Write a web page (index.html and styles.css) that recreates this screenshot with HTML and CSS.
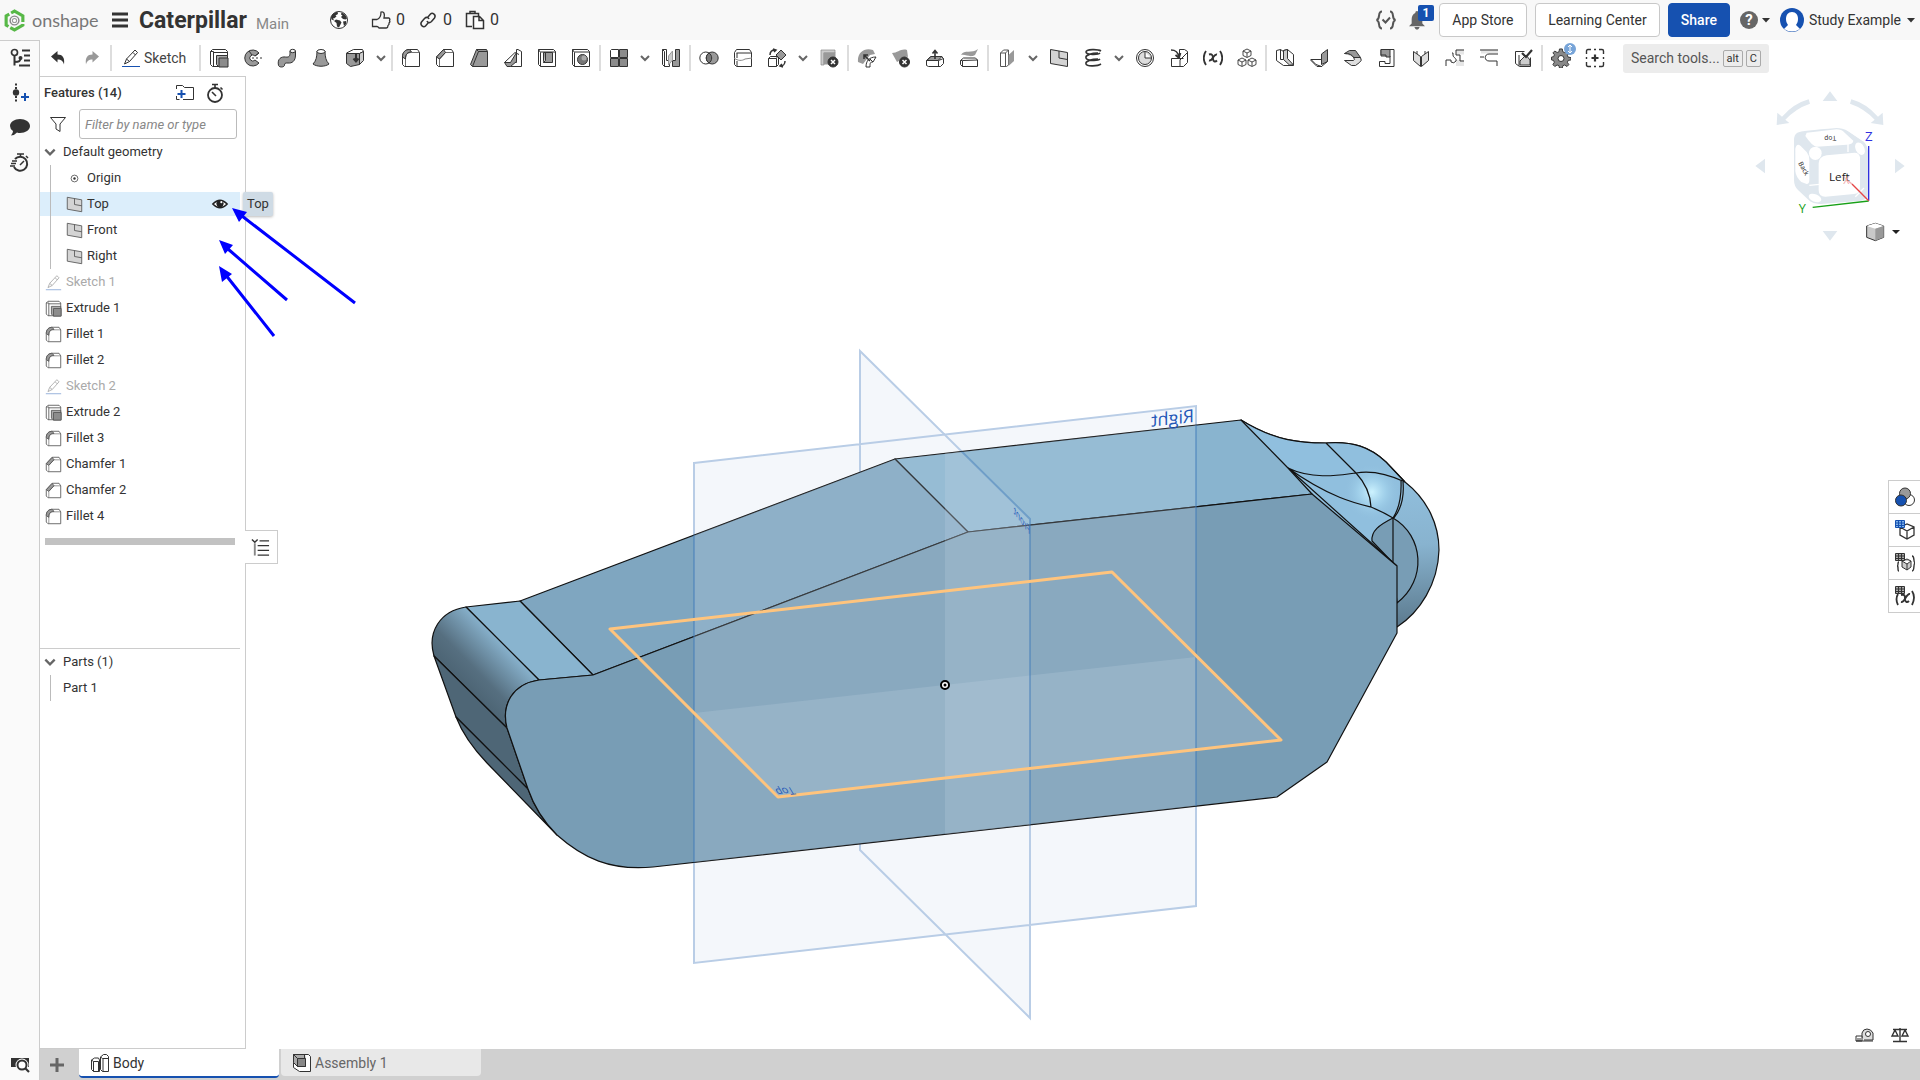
FILE: index.html
```html
<!DOCTYPE html>
<html lang="en">
<head>
<meta charset="utf-8">
<title>Caterpillar | Body</title>
<meta name="viewport" content="width=device-width, initial-scale=1">
<link rel="stylesheet" href="styles.css">
</head>
<body>
<svg class="sprite" aria-hidden="true">
  <symbol id="undo" viewBox="0 0 20 20"><path d="M3 8.500 9.500 3v3.500c5 0 7.500 3 6.500 10-1-3.500-2.500-5-6.500-5v3z" fill="currentColor" stroke="none"/></symbol>
  <symbol id="redo" viewBox="0 0 20 20"><path d="M17 8.500 10.500 3v3.500c-5 0-7.500 3-6.500 10 1-3.500 2.500-5 6.500-5v3z" fill="currentColor" stroke="none"/></symbol>
  <symbol id="sketch" viewBox="0 0 20 20"><path d="M3.500 16l2-5L14 2l2.500 2.500L8.500 13.500zM12 4.500l2.500 2.500M5.500 11l3 2.500" fill="none"/><path d="M1 18.500h18" stroke="#1651b0"/></symbol>
  <symbol id="extrude" viewBox="0 0 20 20"><path d="M1.500 3.500l2-2h13l2 2v15h-15l-2-2zM1.500 3.500h3v15M4.500 4.500h14" fill="#fff"/><path d="M7.500 7.500h11v11h-9l-2-2z" fill="#aaa"/><path d="M10 10h9v9h-9z" fill="#8c8c8c"/></symbol>
  <symbol id="revolve" viewBox="0 0 20 20"><path d="M16 5a8 8 0 1 0 0 10l-4-3a3 3 0 1 1 0-4z" fill="#999"/><path d="M9 10h2m2 0h2m2 0h2M12 8l4-3M6 3l3 4"/></symbol>
  <symbol id="sweep" viewBox="0 0 20 20"><path d="M1.500 17.500c-1.500-7 3-9 7-8.500 4 .5 4.500-1 4.500-5V3h5.500v4c0 6-3.500 8.500-7.500 8-3 0-3.500 0-3.500 2.500-1 2-5 2-6 0z" fill="#999"/><ellipse cx="15.700" cy="3" rx="2.700" ry="1.700" fill="#eee"/></symbol>
  <symbol id="loft" viewBox="0 0 20 20"><path d="M6 3c0 6-1 10-4 13 4 3 12 3 16 0-3-3-4-7-4-13z" fill="#999"/><ellipse cx="10" cy="3.500" rx="4" ry="2" fill="#fff"/></symbol>
  <symbol id="thicken" viewBox="0 0 20 20"><path d="M1.500 5l7-3.500h9l1 2-4 2h-13z" fill="#fff"/><path d="M1.500 5.500h13v11l-9 2-4-3z" fill="#999"/><path d="M14.500 5.500l4-2v9l-4 4z" fill="#ccc"/><path d="M11 6v7M8.500 10.500 11 13.500l2.500-3" stroke-width="2"/></symbol>
  <symbol id="fillet" viewBox="0 0 20 20"><path d="M1.500 9c0-5 3-7.500 7-7.500h8l2 3v14h-15l-2-2z" fill="#fff"/><path d="M1.500 9c0-5 3-7.500 7-7.500l2 2.500c-4 0-6 2-6 7z" fill="#999"/><path d="M4.500 18V11c0-5 2-6.500 6-6.500h8" fill="none" stroke-width=".7"/></symbol>
  <symbol id="chamfer" viewBox="0 0 20 20"><path d="M1.500 9l7-7.500h8l2 3v14h-15l-2-2z" fill="#fff"/><path d="M1.500 9l7-7.500 2 3-6 6.500z" fill="#999"/><path d="M4.500 18V11l6-6.500h8" fill="none" stroke-width=".7"/></symbol>
  <symbol id="draft" viewBox="0 0 20 20"><path d="M1.500 16.500l6-15h10l1 2v15h-15z" fill="#999"/><path d="M3.500 18.500l6-15h9M7.500 1.500l2 2"/></symbol>
  <symbol id="rib" viewBox="0 0 20 20"><path d="M15 1.500l3.500 2v15h-11v-4h6v-13z" fill="#fff"/><path d="M1.500 14.500h6l6-10v9l-6 5H4z" fill="#999"/><path d="M1.500 14.500 12 4.500l4 2"/></symbol>
  <symbol id="shell" viewBox="0 0 20 20"><path d="M1.500 1.500h15l2 2v15h-15l-2-2zM1.500 1.500l2 3v14M3.500 4h15" fill="#fff"/><path d="M6.500 4.500h9v10h-9z" fill="#999"/><path d="M6.500 14.500l2-2v-8" fill="#ccc"/></symbol>
  <symbol id="hole" viewBox="0 0 20 20"><path d="M1.500 1.500h15l2 2v15h-15l-2-2zM1.500 1.500l2 3v14M3.500 4h15" fill="#fff"/><circle cx="11.500" cy="11.500" r="5" fill="#777"/><circle cx="13" cy="10" r="2.500" fill="#aaa" stroke="none"/></symbol>
  <symbol id="pattern" viewBox="0 0 20 20"><path d="M1.500 2.500l1-1h7v8h-8z" fill="#fff"/><path d="M10.500 1.500h8v8h-8zM1.500 10.500h8v8h-8zM10.500 10.500h8v8h-8z" fill="#8c8c8c"/></symbol>
  <symbol id="mirror" viewBox="0 0 20 20"><path d="M1.500 1.500h4v11h3v6h-5l-2-2zM1.500 1.500l2 2v15" fill="#fff"/><path d="M14.500 1.500h4v17h-7v-6h3z" fill="#999"/><path d="M7.500 8l4-5v9l-4 5z" fill="#ccc" stroke="#999"/></symbol>
  <symbol id="boolean" viewBox="0 0 20 20"><circle cx="6.800" cy="10" r="6" fill="none"/><circle cx="13.200" cy="10" r="6" fill="#999"/><path d="M10 5a6 6 0 0 1 0 10 6 6 0 0 1 0-10" fill="#777"/></symbol>
  <symbol id="split" viewBox="0 0 20 20"><path d="M1.500 4.500l2-3h13l2 3v14h-15l-2-2zM3.500 5h15M4 5v5M4 13v5" fill="#fff"/><path d="M1 10c4 3 8 3 11 1l7-1" fill="none" stroke="#888"/></symbol>
  <symbol id="transform" viewBox="0 0 20 20"><path d="M1.500 10.500h8v8h-8zM1.500 10.500l2-2h7l-1 2M9.500 18.500l2-2v-7" fill="#fff"/><path d="M14 2l5 5-5 5-5-5z" fill="#999"/><path d="M3 7c0-3 2-5 5-5M6 1l3 1-2 2M18 13c0 3-2 5-4 5m1-2-2 2 3 1" stroke-width="1.500" fill="none"/></symbol>
  <symbol id="delpart" viewBox="0 0 20 20"><path d="M2 2h14v3H5v12H2z" fill="#ccc" stroke="#888" stroke-width=".7"/><path d="M4.500 4.500h12v12h-12z" fill="#999" stroke="none"/><circle cx="14" cy="14" r="5" fill="#333"/><path d="M12 12l4 4m0-4-4 4" stroke="#fff" stroke-width="1.500"/></symbol>
  <symbol id="modfillet" viewBox="0 0 20 20"><path d="M1 14C0 4 8-1 16 2l2 4-5 1-7 9z" fill="#999" stroke="none"/><path d="M9 19c0-6 3-10 10-10l-3 5c-3 0-3 1-3 5zM13 11l3 3" fill="#fff"/><path d="M7 7l6 6M7 11V7h4" fill="none" stroke-width="1.500"/></symbol>
  <symbol id="delface" viewBox="0 0 20 20"><path d="M1 5c6 0 9-5 15-3l1 7c-6-1-6 3-11 5z" fill="#999" stroke="none"/><circle cx="13.500" cy="14" r="5" fill="#333"/><path d="M11.500 12l4 4m0-4-4 4" stroke="#fff" stroke-width="1.500"/></symbol>
  <symbol id="moveface" viewBox="0 0 20 20"><path d="M1.500 12.500l4-4h11l2 2v5l-3 3h-12l-2-1zM1.500 12.500h12v6M13.500 12.500l5-2" fill="#fff"/><path d="M2 12.500l4-4h11l-4 4z" fill="#999"/><path d="M10 11V3M7.500 5.500 10 2.500l2.500 3" stroke-width="1.600" fill="none"/></symbol>
  <symbol id="replface" viewBox="0 0 20 20"><path d="M2 7c3-6 11-1 17-6l-3 6c-5 3-9-1-14 0z" fill="#999" stroke="none"/><path d="M1.500 12.500l3-2.500h12l2 2v6.500h-15l-2-2zM1.500 12.500h2l15-.5M3.500 13v5.500" fill="#fff"/></symbol>
  <symbol id="offset" viewBox="0 0 20 20"><path d="M3.500 5l3-3h5v15l-2 1.500h-6zM3.500 5h5v13M8.500 5l3-3" fill="#fff" stroke="#555"/><path d="M11.500 7 17 2v11l-5.500 5z" fill="#999" stroke="none"/></symbol>
  <symbol id="plane" viewBox="0 0 20 20"><path d="M1.500 1.500l17 3v14l-17-3z" fill="#d4d4d4"/><path d="M10 3v7l8.500 1.500" fill="none"/></symbol>
  <symbol id="helix" viewBox="0 0 20 20"><path d="M18 3C15 1 3 1 3 4s12 3 14 1M15 5C9 5 2 7 3 10s12 3 14 1M15 11c-6 0-13 2-12 5s12 2 15 0" fill="none" stroke-width="1.600"/></symbol>
  <symbol id="mass" viewBox="0 0 20 20"><circle cx="10" cy="10" r="8.500" fill="#fff"/><circle cx="10" cy="10" r="6.500" fill="#ddd"/><path d="M10 4v6h6" fill="#fff"/></symbol>
  <symbol id="derived" viewBox="0 0 20 20"><path d="M2.500 10.500v8h12l4-4v-11l-3-2h-5v9zM10.500 10.500h4M18 5l-7 7v6" fill="#fff"/><path d="M2 2c5 0 7 2 8 7M6.500 7 10 10l1.500-5" stroke-width="1.700" fill="none"/></symbol>
  <symbol id="variable" viewBox="0 0 20 20"><path d="M3 3c-3 4-3 10 0 14M17 3c3 4 3 10 0 14" stroke-width="1.800" fill="none"/><path d="M6 6.500c3-1 4 1 4 4s2 4 4 2M14 6.500c-4-1-4 7-8 6" stroke-width="1.900" fill="none"/></symbol>
  <symbol id="cubes" viewBox="0 0 20 20"><path d="M10 1l4 2v4.500L10 9.500 6 7.500V3zM6 3l4 2 4-2M10 5v4M5 10l4 2v4.500L5 18.500 1 16.500V12zM1 12l4 2 4-2M5 14v4M15 10l4 2v4.500l-4 2-4-2V12zM11 12l4 2 4-2M15 14v4" fill="#fff" stroke-width=".9"/></symbol>
  <symbol id="sheet" viewBox="0 0 20 20"><path d="M1.500 2.500l4-1v10h3v-9l4-1 6 5v11h-10l-7-5z" fill="#fff"/><path d="M8.500 2.500l4-1v9l6 6.500h-4l-6-5.500z" fill="#ccc"/><path d="M5.500 1.500l3 2"/></symbol>
  <symbol id="flange" viewBox="0 0 20 20"><path d="M12.500 6l6-4.500v12l-6 3z" fill="#999"/><path d="M2 11.500h10.500v-5M2 11.500l5 5 5.500 2 6-5M2 11.500v1l6 6h5" fill="none"/></symbol>
  <symbol id="hem" viewBox="0 0 20 20"><path d="M1.500 5.500l5-3h6l5 7h-7q-2-4-9-4z" fill="#999"/><path d="M1.500 5.500q7 0 9 4h7q2 3-1 5l-4 3h-4l-7-5h9q2-1 0-3" fill="#ddd"/></symbol>
  <symbol id="tabt" viewBox="0 0 20 20"><path d="M4 1.500h13v17H2.500v-5H8v2h5V8H4z" fill="#fff"/><path d="M4 1.500h9V9H9V7H4z" fill="#999"/></symbol>
  <symbol id="bend" viewBox="0 0 20 20"><path d="M2.500 3.500l7 5v10l-7-6zM17.500 3.500l-7 5v10l7-6z" fill="#ddd"/><path d="M6 3v3m8-3v3"/></symbol>
  <symbol id="joint" viewBox="0 0 20 20"><path d="M11 1.500h8v5h-8zM11 12h8v6h-8z" fill="#e6e6e6" stroke="none"/><path d="M1 18v-6h5v2q3 2 5-1c1-3-3-3-3-6V5h-1M19 2h-8v5h4v6h4" fill="none"/></symbol>
  <symbol id="corner" viewBox="0 0 20 20"><path d="M2 1.500h17v4H2z" fill="#e6e6e6" stroke="none"/><path d="M1 2h18M19 6H10c-5 0-5 7 0 7h8v5M1 9h4" fill="none"/></symbol>
  <symbol id="finish" viewBox="0 0 20 20"><path d="M2.500 3.500h9M2.500 3.500v12l4 3h11v-9M6 7v11" fill="none"/><path d="M7 13l6-6 4 5v5H7z" fill="#ccc"/><path d="M9 5l4 4 6-7" stroke-width="2.200" fill="none"/></symbol>
  <symbol id="gear" viewBox="0 0 20 20"><path d="M8.500 1h3l.5 3 2 .8 2.500-1.600 2 2-1.600 2.500.8 2 3 .5v2.500l-3 .5-.8 2 1.600 2.500-2 2-2.500-1.600-2 .8-.5 2.500h-3l-.5-2.500-2-.8-2.500 1.600-2-2L3 15.200l-.8-2L0 12.700V9.700l2.300-.5.8-2L1.500 5.200l2-2L6 4.800 8 4z" fill="#888" transform="translate(.5 0) scale(.94)"/><circle cx="10" cy="10.500" r="3" fill="#fff"/></symbol>
  <symbol id="addtool" viewBox="0 0 20 20"><path d="M1.500 6V3q0-1.500 1.500-1.500h3M14 1.500h3q1.500 0 1.500 1.500v3M18.500 14v3q0 1.500-1.500 1.500h-3M6 18.500H3q-1.500 0-1.500-1.500v-3M1.500 9v2M18.500 9v2M9 1.500h2M9 18.500h2" fill="none" stroke-width="1.400"/><path d="M10 6.500v7M6.500 10h7" stroke-width="2.200"/></symbol>
  <symbol id="chev" viewBox="0 0 12 12"><path d="M2 4l4 4 4-4" fill="none" stroke="#666" stroke-width="2"/></symbol>
  <symbol id="caret" viewBox="0 0 10 10"><path d="M1 3h8L5 7.500z" fill="#333" stroke="none"/></symbol>
  <symbol id="originpt" viewBox="0 0 20 20"><circle cx="10" cy="10" r="4" fill="#fff"/><circle cx="10" cy="10" r="1.400" fill="#333" stroke="none"/></symbol>
  <symbol id="tree" viewBox="0 0 20 20"><circle cx="4.500" cy="4.500" r="3" fill="none" stroke-width="1.700"/><path d="M4.500 8v9.500M4.500 14c5 0 6-1 6-4" fill="none" stroke-width="2"/><circle cx="10.500" cy="10" r="2" fill="#333" stroke="none"/><path d="M12 2.500h8M14 7.500h6M14 12.500h6M9 17.500h11" stroke-width="1.800"/></symbol>
  <symbol id="insert" viewBox="0 0 20 20"><circle cx="6" cy="9.500" r="3.200" fill="#333" stroke="none"/><path d="M6 .5v2M6 4v2M6 13v2m0 1.500v2" stroke-width="2"/><path d="M15 10v8M11 14h8" stroke="#1651b0" stroke-width="2"/></symbol>
  <symbol id="comment" viewBox="0 0 20 20"><path d="M10 1c5.500 0 10 3 10 7s-4.500 7-10 7q-1.500 0-3-.5Q5 17 1 17.500q2-2 2-4.500Q0 11 0 8c0-4 4.500-7 10-7z" fill="#333" stroke="none"/></symbol>
  <symbol id="history" viewBox="0 0 20 20"><path d="M5 6a7 7 0 1 1-1 8" fill="none" stroke-width="2"/><path d="M7 1h7M10.500 1v3M16 3l2 2M2 8h5M1 10.500h5M0 13h5M10 12l4-4" stroke-width="1.500"/></symbol>
  <symbol id="stopwatch" viewBox="0 0 20 20"><circle cx="10" cy="12" r="7" fill="none" stroke-width="1.800"/><path d="M7 1.500h6M10 1.500V5M15.500 4.500l2 2M7 9l4 4" stroke-width="1.600"/></symbol>
  <symbol id="addfolder" viewBox="0 0 20 20"><path d="M1.500 6V2.500h6l2 2h9v12H8M1.500 13v3.500h3" fill="none"/><path d="M6.500 7v8M2.500 11h8" stroke="#1651b0" stroke-width="2"/></symbol>
  <symbol id="funnel" viewBox="0 0 20 20"><path d="M2.500 3.500h15L12 10v7.500L8 15v-5z" fill="none"/></symbol>
  <symbol id="eye" viewBox="0 0 20 20"><path d="M2 10q8-8.500 16 0-8 8.500-16 0z" fill="#fff" stroke-width="1.600"/><circle cx="10" cy="9.500" r="4" fill="#222" stroke="none"/><circle cx="11.500" cy="8" r="1.200" fill="#fff" stroke="none"/></symbol>
  <symbol id="find" viewBox="0 0 20 20"><path d="M1 4h18v9H1z" fill="#333" stroke="none"/><circle cx="12" cy="11" r="4.500" fill="#fafafa" stroke="#fafafa" stroke-width="4"/><circle cx="12" cy="11" r="4.500" fill="#fff" stroke-width="2"/><path d="M15 14l4 4" stroke-width="2.200"/></symbol>
  <symbol id="bodytab" viewBox="0 0 20 20"><path d="M1.500 7l3-2h4l1 2v11.500h-6l-2-2zM1.500 7l2 1.500h5V18M3.500 8.500v10M10.500 4l3-2.500h3l2 2v15h-6l-2-2zM10.500 4l2 1.500h6M13 5.500v13" fill="#fff"/></symbol>
  <symbol id="asmtab" viewBox="0 0 20 20"><path d="M1.500 1.500h15l2 2v15h-11l-6-4z" fill="#fff"/><path d="M1.500 1.500h11l1 12h-8l-4-4z" fill="#aaa"/><path d="M5.500 5.500h8v8h-8zM1.500 1.500l4 4M12.500 1.500v4" fill="#888"/></symbol>
  <symbol id="list" viewBox="0 0 20 20"><path d="M1 2l3 3 3-3" fill="none" stroke-width="1.500"/><path d="M4 6v13" stroke="#888" stroke-width="2"/><path d="M9 3.500h10M7 8.500h12M7 13.500h12M7 18.500h12" stroke-width="1.300"/></symbol>
  <symbol id="appearance" viewBox="0 0 20 20"><circle cx="14" cy="13" r="5.500" fill="#fff"/><circle cx="10" cy="6.500" r="5.500" fill="#999"/><circle cx="6" cy="13.500" r="5.500" fill="#1651b0"/></symbol>
  <symbol id="config" viewBox="0 0 20 20"><path d="M5 7l7-3 7 3v8l-7 4-7-4zM5 7l7 4 7-4M12 11v8" fill="#fff" stroke-width="1.300"/><path d="M.5.500h9v7h-9z" fill="#7db0e8" stroke="#1651b0"/><path d="M.5 3h9M.5 5.500h9M3.500.5v7M6.500.5v7" stroke="#1651b0"/></symbol>
  <symbol id="configpart" viewBox="0 0 20 20"><path d="M7 8l5-2 4 2v6l-4 3-5-3zM7 8l5 3 4-3M12 11v6" fill="#ccc"/><path d="M4 9c-2 0 0 4-2 4 2 0 0 5 2 5M17 3c3 0 1 6 3 7-2 1 0 8-3 8" fill="none" stroke-width="1.400"/><path d="M.5.500h9v7h-9z" fill="#aaa"/><path d="M.5 3h9M.5 5.500h9M3.500.5v7M6.500.5v7"/></symbol>
  <symbol id="vartable" viewBox="0 0 20 20"><path d="M3 8q-3 5 0 11M17 5q4 6 0 14" fill="none" stroke-width="1.800"/><path d="M6 9c4-1 4 1 4 4s2 4 4 2M15 8c-4-1-5 9-9 8" fill="none" stroke-width="1.900"/><path d="M.5.500h9v7h-9z" fill="#aaa"/><path d="M.5 3h9M.5 5.500h9M3.500.5v7M6.500.5v7"/></symbol>
</svg>

<div class="app">
  <header class="topbar">
    <a class="brand" href="#home">
      <svg class="logo" viewBox="0 0 20 22"><path d="M10 2l8 4.500v9L10 20l-8-4.500v-9z" fill="none" stroke="#57b847" stroke-width="3" stroke-dasharray="15 2"/><circle cx="10" cy="11" r="4.200" fill="none" stroke="#888" stroke-width="1.400"/><circle cx="10" cy="11" r="2" fill="#fff" stroke="#999" stroke-width="1"/></svg>
      <span>onshape</span>
    </a>
    <button class="plain menu" aria-label="Document menu"><svg viewBox="0 0 16 16"><path d="M0 2h16M0 8h16M0 14h16" stroke="#333" stroke-width="3"/></svg></button>
    <h1>Caterpillar</h1><span class="branch">Main</span>
    <button class="plain globe" aria-label="Public"><svg class="ic" viewBox="0 0 20 20"><circle cx="10" cy="10" r="8.500" fill="#fff"/><path d="M2 7c1-3 4-5 6.500-5.300L9 4 6.500 5.500l1 1L5 8.500 4 8l1 2.500-2.500-1zM7 9.500l4 1 1.500 2-2.500 5-2-1-.5-3.500L5 11zM12.500 2.500c3 1 4.500 3 5.500 6l-1.500 1-2.500-.5-2-2 1.500-1.500-1.500-1zM14 11.500l3-.5v3l-2 2z" fill="#333" stroke="none"/></svg></button>
    <button class="plain count"><svg class="ic" viewBox="0 0 20 20"><path d="M1.500 9.500H6c3-1 4-4 4-7.500 3-1 4 2 3 6h5q1.500 1 .5 2.500 1 1.500-.5 2.500.5 1.500-1 2.500 0 2-1.500 2.500H8q-1-1.500-2-1.500H1.500z" fill="none" stroke-width="1.300"/></svg>0</button>
    <button class="plain count"><svg class="ic" viewBox="0 0 20 20"><path d="M9.500 7.500l3-3.500c2-2 6 1 4 4l-3 3.500c-2 2-4 1-4.500-.5M10.500 12.500l-3 3.500c-2 2-6-1-4-4l3-3.500c2-2 4-1 4.500.5" fill="none" stroke-width="1.500"/></svg>0</button>
    <button class="plain count"><svg class="ic" viewBox="0 0 20 20"><path d="M7 16.500H1.500v-13h12V6M5 3.500v-2h5v2" fill="none" stroke-width="1.500"/><path d="M8.500 6.500h6l4 4v8h-10zM14 6.500v4h4.500" fill="#fff" stroke-width="1.500"/></svg>0</button>
    <div class="account">
      <button class="plain" aria-label="Tasks"><svg class="ic" viewBox="0 0 20 20"><path d="M6 1.500C1 1.500 5 9 .5 10c4.500 1 .5 8.500 5.500 8.500M14 1.500c5 0 1 7.500 5.500 8.500-4.500 1-.5 8.500-5.500 8.500" fill="none" stroke="#555" stroke-width="2"/><path d="M6.500 9.500l3 3 4.500-5" fill="none" stroke="#555" stroke-width="2"/></svg></button>
      <button class="plain bell" aria-label="Notifications"><svg viewBox="0 0 18 22"><path d="M9 1q2 0 2 2 4 2 4 7v5l3 3H0l3-3v-5q0-5 4-7 0-2 2-2zM6 19h6q-1 3-3 3t-3-3z" fill="#666"/></svg><span class="badge">1</span></button>
      <button class="btn store">App Store</button>
      <button class="btn learn">Learning Center</button>
      <button class="btn share">Share</button>
      <button class="plain help" aria-label="Help"><span class="q">?</span><svg class="caret"><use href="#caret"/></svg></button>
      <button class="plain user"><svg class="avatar" viewBox="0 0 24 24"><circle cx="12" cy="12" r="12" fill="#1651b0"/><path d="M12 4c4 0 6 3 6 7 0 3-1 4-2 6l4 4q-8 5-16 0l4-4c-1-2-2-3-2-6 0-4 2-7 6-7z" fill="#fff"/></svg>Study Example<svg class="caret"><use href="#caret"/></svg></button>
    </div>
  </header>

  <div class="body">
    <nav class="rail" aria-label="Panels">
      <button class="plain" aria-label="Feature list"><svg class="ic"><use href="#tree"/></svg></button>
      <button class="plain" aria-label="Insert"><svg class="ic"><use href="#insert"/></svg></button>
      <button class="plain" aria-label="Comments"><svg class="ic"><use href="#comment"/></svg></button>
      <button class="plain" aria-label="History"><svg class="ic"><use href="#history"/></svg></button>
      <button class="plain last" aria-label="Search tabs"><svg class="ic"><use href="#find"/></svg></button>
    </nav>

    <div class="work">
      <div class="toolbar" role="toolbar">
        <button aria-label="Undo"><svg class="ic"><use href="#undo"/></svg></button>
        <button class="off" aria-label="Redo"><svg class="ic"><use href="#redo"/></svg></button><i></i>
        <button class="sk"><svg class="ic"><use href="#sketch"/></svg>Sketch</button><i></i>
        <button aria-label="Extrude"><svg class="ic"><use href="#extrude"/></svg></button>
        <button aria-label="Revolve"><svg class="ic"><use href="#revolve"/></svg></button>
        <button aria-label="Sweep"><svg class="ic"><use href="#sweep"/></svg></button>
        <button aria-label="Loft"><svg class="ic"><use href="#loft"/></svg></button>
        <button aria-label="Thicken"><svg class="ic"><use href="#thicken"/></svg></button>
        <button class="dd" aria-label="More"><svg class="chev"><use href="#chev"/></svg></button><i></i>
        <button aria-label="Fillet"><svg class="ic"><use href="#fillet"/></svg></button>
        <button aria-label="Chamfer"><svg class="ic"><use href="#chamfer"/></svg></button>
        <button aria-label="Draft"><svg class="ic"><use href="#draft"/></svg></button>
        <button aria-label="Rib"><svg class="ic"><use href="#rib"/></svg></button>
        <button aria-label="Shell"><svg class="ic"><use href="#shell"/></svg></button>
        <button aria-label="Hole"><svg class="ic"><use href="#hole"/></svg></button><i></i>
        <button aria-label="Pattern"><svg class="ic"><use href="#pattern"/></svg></button>
        <button class="dd" aria-label="More"><svg class="chev"><use href="#chev"/></svg></button>
        <button aria-label="Mirror"><svg class="ic"><use href="#mirror"/></svg></button><i></i>
        <button aria-label="Boolean"><svg class="ic"><use href="#boolean"/></svg></button>
        <button aria-label="Split"><svg class="ic"><use href="#split"/></svg></button>
        <button aria-label="Transform"><svg class="ic"><use href="#transform"/></svg></button>
        <button class="dd" aria-label="More"><svg class="chev"><use href="#chev"/></svg></button>
        <button aria-label="Delete part"><svg class="ic"><use href="#delpart"/></svg></button><i></i>
        <button aria-label="Modify fillet"><svg class="ic"><use href="#modfillet"/></svg></button>
        <button aria-label="Delete face"><svg class="ic"><use href="#delface"/></svg></button>
        <button aria-label="Move face"><svg class="ic"><use href="#moveface"/></svg></button>
        <button aria-label="Replace face"><svg class="ic"><use href="#replface"/></svg></button><i></i>
        <button aria-label="Offset surface"><svg class="ic"><use href="#offset"/></svg></button>
        <button class="dd" aria-label="More"><svg class="chev"><use href="#chev"/></svg></button>
        <button aria-label="Plane"><svg class="ic"><use href="#plane"/></svg></button>
        <button aria-label="Helix"><svg class="ic"><use href="#helix"/></svg></button>
        <button class="dd" aria-label="More"><svg class="chev"><use href="#chev"/></svg></button>
        <button aria-label="Mass properties"><svg class="ic"><use href="#mass"/></svg></button>
        <button aria-label="Derived"><svg class="ic"><use href="#derived"/></svg></button>
        <button aria-label="Variable"><svg class="ic"><use href="#variable"/></svg></button>
        <button aria-label="Composite part"><svg class="ic"><use href="#cubes"/></svg></button><i></i>
        <button aria-label="Sheet metal"><svg class="ic"><use href="#sheet"/></svg></button>
        <button aria-label="Flange"><svg class="ic"><use href="#flange"/></svg></button>
        <button aria-label="Hem"><svg class="ic"><use href="#hem"/></svg></button>
        <button aria-label="Tab"><svg class="ic"><use href="#tabt"/></svg></button>
        <button aria-label="Bend"><svg class="ic"><use href="#bend"/></svg></button>
        <button aria-label="Joint"><svg class="ic"><use href="#joint"/></svg></button>
        <button aria-label="Corner"><svg class="ic"><use href="#corner"/></svg></button>
        <button aria-label="Finish sheet metal"><svg class="ic"><use href="#finish"/></svg></button><i></i>
        <button class="gear" aria-label="Custom features"><svg class="ic"><use href="#gear"/></svg><svg class="dot" viewBox="0 0 12 12"><circle cx="6" cy="6" r="6" fill="#77a4d8"/><path d="M6 2v8M4 4l2-2 2 2M4 8l2 2 2-2" stroke="#fff" fill="none"/></svg></button>
        <button aria-label="Add custom features"><svg class="ic"><use href="#addtool"/></svg></button>
        <button class="search">Search tools... <kbd>alt</kbd><kbd>C</kbd></button>
      </div>

      <div class="stage">
        <aside class="panel">
          <section class="features">
            <div class="phead"><h2>Features (14)</h2>
              <button class="plain" aria-label="Add folder"><svg class="ic"><use href="#addfolder"/></svg></button>
              <button class="plain" aria-label="Regeneration times"><svg class="ic"><use href="#stopwatch"/></svg></button></div>
            <div class="filter"><svg class="ic"><use href="#funnel"/></svg><input type="text" aria-label="Filter by name or type" placeholder="Filter by name or type"></div>
            <div class="group"><svg class="chev big"><use href="#chev"/></svg>Default geometry</div>
            <ul class="kids">
              <li><svg class="si"><use href="#originpt"/></svg>Origin</li>
              <li class="hot"><svg class="si"><use href="#plane"/></svg>Top<svg class="eye"><use href="#eye"/></svg><span class="tip">Top</span></li>
              <li><svg class="si"><use href="#plane"/></svg>Front</li>
              <li><svg class="si"><use href="#plane"/></svg>Right</li>
            </ul>
            <ul class="list">
              <li class="dim"><svg class="si"><use href="#sketch"/></svg>Sketch 1</li>
              <li><svg class="si"><use href="#extrude"/></svg>Extrude 1</li>
              <li><svg class="si"><use href="#fillet"/></svg>Fillet 1</li>
              <li><svg class="si"><use href="#fillet"/></svg>Fillet 2</li>
              <li class="dim"><svg class="si"><use href="#sketch"/></svg>Sketch 2</li>
              <li><svg class="si"><use href="#extrude"/></svg>Extrude 2</li>
              <li><svg class="si"><use href="#fillet"/></svg>Fillet 3</li>
              <li><svg class="si"><use href="#chamfer"/></svg>Chamfer 1</li>
              <li><svg class="si"><use href="#chamfer"/></svg>Chamfer 2</li>
              <li><svg class="si"><use href="#fillet"/></svg>Fillet 4</li>
            </ul>
            <div class="rollback"></div>
          </section>
          <section class="parts">
            <div class="group"><svg class="chev big"><use href="#chev"/></svg>Parts (1)</div>
            <ul class="partlist"><li>Part 1</li></ul>
          </section>
          <button class="flyout" aria-label="Toggle list"><svg class="ic"><use href="#list"/></svg></button>
        </aside>

        <main class="canvas">
          <svg class="model" viewBox="246 76 1674 973" role="img" aria-label="Part 1">
            <defs>
              <linearGradient id="cyl" gradientUnits="userSpaceOnUse" x1="464" y1="681" x2="503" y2="643"><stop offset="0" stop-color="#4e6676"/><stop offset=".3" stop-color="#566f80"/><stop offset="1" stop-color="#88b2cd"/></linearGradient>
              <radialGradient id="shine" gradientUnits="userSpaceOnUse" cx="1372" cy="492" r="28"><stop offset="0" stop-color="#cdf3ff"/><stop offset=".5" stop-color="#a5d5ee" stop-opacity=".7"/><stop offset="1" stop-color="#92c0de" stop-opacity="0"/></radialGradient>
              <linearGradient id="tail" gradientUnits="userSpaceOnUse" x1="1400" y1="480" x2="1410" y2="626"><stop offset="0" stop-color="#91bfdd"/><stop offset=".45" stop-color="#88b3cf"/><stop offset=".8" stop-color="#6c8fa6"/><stop offset="1" stop-color="#5c7a8e"/></linearGradient>
              <clipPath id="solid"><path d="M466 607 520 601 895 459 1241 420 1397 566V633L1327 762 1277 797 653 867C610 871 583 858 557 835L487 763 456 717 434 656C427 632 440 611 466 607z"/></clipPath>
            </defs>
            <path class="wash" d="M694 463 1196 406V906L694 963zM860 351 1030 519V1018L860 850z"/>
            <g class="rim"><path d="M694 463 1196 406V906L694 963zM860 351 1030 519V1018L860 850z"/></g>
            <g class="edge">
              <path fill="url(#tail)" d="M1241 420C1275 441 1300 443 1326 443 1353 441 1370 447 1386 462L1405 482C1428 500 1439 525 1439 550 1438 584 1420 612 1397 627z"/>
              <path fill="#90bfde" stroke="none" d="M1241 420C1275 441 1300 443 1326 443 1353 441 1370 447 1386 462L1403 482C1404 500 1398 512 1393 518 1377 525 1371 533 1372 543z"/>
              <circle cx="1372" cy="492" r="28" fill="url(#shine)" stroke="none"/>
              <path fill="#789db5" d="M1393 518C1424 536 1427 580 1397 603L1393 563 1372 541C1371 531 1379 525 1393 518z"/>
              <path fill="none" d="M1241 420C1275 441 1300 443 1326 443 1353 441 1370 447 1386 462L1405 482M1288 468C1315 481 1345 474 1356 473 1373 470 1392 476 1405 482M1288 468C1330 498 1358 504 1371 507Q1383 512 1393 518M1326 443 1356 473Q1370 488 1371 507M1401 481Q1402 504 1393 518M1403 482Q1405 504 1394 518M1393 518V563M1288 468 1397 566"/>
              <path fill="#89b4cf" d="M895 459 1241 420 1288 468 1312 494 968 532z"/>
              <path fill="#7fa6c0" d="M520 601 895 459 968 532 593 675z"/>
              <path fill="#89b4cf" d="M466 607 520 601 593 675 539 680z"/>
              <path fill="url(#cyl)" d="M466 607C440 611 427 632 434 656L507 728C501 704 513 684 539 680z"/>
              <path fill="#4e6676" d="M434 656 456 717 528 789 507 728z"/>
              <path fill="#4e6676" d="M456 717Q465 740 487 763L557 835Q537 815 528 789z"/>
              <path fill="#789db5" d="M539 680 593 675 968 532 1312 494 1397 566V633L1327 762 1277 797 653 867C610 871 583 858 557 835Q537 815 528 789L507 728C501 704 513 684 539 680z"/>
            </g>
            <g clip-path="url(#solid)">
              <path class="veil" d="M694 463 1196 406V906L694 963z"/>
              <path class="veil" d="M860 351 945 435V935L1030 1018V519z"/>
              <path class="veil" d="M694 713 1196 657 1281 740 778 797z"/>
              <path class="rim over" d="M694 463V963M1196 406V906M860 351 1030 519V1018"/>
            </g>
            <path class="top" d="M610 629 1112 572 1281 740 778 797z"/>
            <g class="ptext">
              <text font-size="18" transform="matrix(-1 .11 0 1 1194 422)">Right</text>
              <text font-size="11" transform="matrix(-.6 -.8 0 1 1030 535)">Front</text>
              <text font-size="10" transform="matrix(-1 .1 -.6 -1 792 787)">Top</text>
            </g>
            <circle cx="945" cy="685" r="4" fill="#fff" stroke="#000" stroke-width="2"/><circle cx="945" cy="685" r="1.500"/>
          </svg>

          <svg class="cube" viewBox="0 0 540 510" aria-label="View cube">
            <g fill="#dfe7ee"><path d="M270 34l22 29h-44zM270 482l22-29h-44zM46 258l29-22v44zM494 258l-29-22v44z"/>
            <path d="M206 58q-44 12-80 52l-14-12-2 37 38-6-12-10q32-34 74-48zM334 58q44 12 80 52l14-12 2 37-38-6 12-10q-32-34-74-48z"/>
            <path d="M172 158q12-6 118-14 16 0 36 10l42 28q14 12 16 30v140q-10 8-20 10l-120 10q-20 2-34-8l-36-34q-12-12-12-30V180q0-16 10-22z"/></g>
            <g fill="#fff"><path d="M200 158l90-10q14 0 24 10l26 24q0 10-20 12l-90 6q-14-2-34-32zM166 206q4-18 16-8l18 18q8 10 8 24v60q0 12-8 12l-16-6q-16-14-18-32zM260 226l84-8q14 0 16 14v88q0 20-18 22l-86 8q-20 0-20-20v-80q0-20 24-24z"/><ellipse cx="226" cy="220" rx="19" ry="20"/><ellipse cx="360" cy="206" rx="13" ry="20" transform="rotate(-28 360 206)"/><ellipse cx="225" cy="354" rx="20" ry="11" transform="rotate(22 225 354)"/></g>
            <path d="M324 192v24M208 316l30-3M320 148l50 34M168 330l34 34M346 350l26-26" stroke="#fff" stroke-width="4"/>
            <text x="267" y="302" font-size="35" fill="#222">Left</text>
            <text font-size="20" fill="#222" transform="translate(288 167) rotate(176)">Top</text>
            <text font-size="20" fill="#222" transform="translate(174 250) rotate(60)">Back</text>
            <path d="M386 198v164" stroke="#2f2fe0" stroke-width="4"/><path d="M386 363 218 382" stroke="#18a018" stroke-width="4"/><path d="M386 362l-50-50" stroke="#e64646" stroke-width="4"/><path d="M336 312l-12-10" stroke="#f0b0b0" stroke-width="4"/>
            <text x="375" y="184" font-size="40" fill="#2f2fe0">Z</text><text x="176" y="399" font-size="38" fill="#18a018">Y</text><text x="310" y="311" font-size="32" fill="#f2aaaa">X</text>
            <path d="M380 438l26-8 25 8v34l-25 10-26-10z" fill="#c9c9c9" stroke="#333" stroke-width="3"/><path d="M380 438l26-8 25 8-25 8z" fill="#fff"/><path d="M406 446l25-8v34l-25 10z" fill="#999"/>
            <path d="M456 450h24l-12 12z" fill="#222"/>
          </svg>

          <div class="sidetools">
            <button aria-label="Appearance"><svg class="ic"><use href="#appearance"/></svg></button>
            <button aria-label="Configurations"><svg class="ic"><use href="#config"/></svg></button>
            <button aria-label="Part configurations"><svg class="ic"><use href="#configpart"/></svg></button>
            <button aria-label="Variable table"><svg class="ic"><use href="#vartable"/></svg></button>
          </div>
          <div class="measure">
            <button class="plain" aria-label="Measure"><svg class="ic" viewBox="0 0 20 20"><path d="M7 13V8q1-4 5-4t6 4v7H9" fill="#ddd"/><circle cx="13" cy="9" r="2.500" fill="#fff"/><path d="M1 11h6v5H1zM3 13v3M5 13v3" fill="#fff"/><path d="M1 16h17" /></svg></button>
            <button class="plain" aria-label="Mass properties"><svg class="ic" viewBox="0 0 20 20"><path d="M10 3v13M3 4.500h14M3 16.500h14M5 5l-3 6h6zM15 5l-3 6h6z" fill="none" stroke-width="1.400"/></svg></button>
          </div>
        </main>

        <svg class="arrows" viewBox="0 0 330 270" aria-hidden="true"><g stroke="#00f" stroke-width="3"><path d="M315 227 202 140M247 224 188 173M234 260 185 198"/></g><path d="M192 132l15 4-8 10zM179 164l14 5-8 9zM179 190l13 8-10 8z" fill="#00f"/></svg>
      </div>

      <footer class="tabs">
        <button class="plus" aria-label="Add tab"><svg viewBox="0 0 16 16"><path d="M8 1v14M1 8h14" stroke="#666" stroke-width="3"/></svg></button>
        <button class="tab on"><svg class="ic"><use href="#bodytab"/></svg>Body</button>
        <button class="tab"><svg class="ic"><use href="#asmtab"/></svg>Assembly 1</button>
      </footer>
    </div>
  </div>
</div>
</body>
</html>
```
FILE: styles.css
```css
* { box-sizing: border-box; }
body { margin: 0; font-family: Roboto, "Liberation Sans", sans-serif; font-size: 14px; line-height: 20px; color: #333; background: #fff; }
button, input { font: inherit; color: inherit; }
h1, h2, ul { margin: 0; padding: 0; }
ul { list-style: none; }
svg { display: block; flex: none; stroke: none; }
.sprite { position: absolute; width: 0; height: 0; }
.ic { width: 20px; height: 20px; stroke: #333; fill: none; }
.si { width: 17px; height: 17px; stroke: #555; fill: none; }
.chev { width: 12px; height: 12px; }
.chev.big { width: 14px; height: 14px; }
.caret { width: 10px; height: 10px; }
.plain { border: 0; padding: 0; background: none; display: flex; align-items: center; }

.app { display: flex; flex-direction: column; height: 100vh; }
.topbar { display: flex; align-items: center; height: 40px; flex: none; background: #f8f8f8; padding: 0 4px; }
.brand { display: flex; align-items: center; gap: 7px; width: 108px; color: #777; text-decoration: none; font-family: Lato, sans-serif; font-size: 18px; }
.logo { width: 21px; height: 23px; }
.menu { width: 27px; }
.menu svg { width: 16px; height: 16px; }
h1 { font-size: 23px; line-height: 28px; font-weight: 700; color: #333; padding-top: 2px; }
.branch { margin-left: 9px; padding-top: 7px; font-size: 15px; color: #888; }
.globe { margin-left: 40px; margin-right: 22px; }
.count { gap: 5px; font-size: 16px; width: 47px; }
.account { margin-left: auto; display: flex; align-items: center; height: 40px; }
.bell { position: relative; width: 30px; margin-left: 13px; }
.bell svg { width: 16px; height: 22px; }
.badge { position: absolute; left: 9px; top: -4px; width: 16px; height: 16px; border-radius: 2px; background: #1651b0; color: #fff; font-size: 12px; line-height: 16px; font-weight: 700; text-align: center; }
.btn { height: 34px; padding: 0; border: 1px solid #c8c8c8; border-radius: 4px; background: #fff; text-align: center; margin-right: 8px; }
.store { width: 88px; }
.learn { width: 125px; }
.share { width: 62px; background: #1651b0; border-color: #1651b0; color: #fff; font-weight: 500; }
.help { margin: 0 9px 0 2px; gap: 3px; }
.q { width: 18px; height: 18px; border-radius: 9px; background: #666; color: #fff; font-size: 15px; line-height: 18px; font-weight: 700; text-align: center; }
.user { gap: 5px; }
.avatar { width: 24px; height: 24px; }

.body { display: flex; flex: 1; min-height: 0; }
.rail { width: 40px; flex: none; display: flex; flex-direction: column; align-items: center; background: #fafafa; border-right: 1px solid #ccc; box-shadow: inset 0 1px #ccc; }
.rail button { height: 35px; }
.rail .last { margin-top: auto; height: 32px; }
.work { flex: 1; min-width: 0; display: flex; flex-direction: column; }
.toolbar { display: flex; align-items: center; height: 36px; flex: none; padding-left: 1px; }
.toolbar button { border: 0; padding: 0; background: none; width: 34px; height: 32px; flex: none; display: flex; align-items: center; justify-content: center; }
.toolbar button.dd { width: 18px; }
.toolbar button.sk { width: 85px; gap: 3px; justify-content: flex-start; padding-left: 8px; color: #444; }
.toolbar button.off { color: #999; }
.toolbar i { width: 2px; height: 26px; margin: 0 1px; background: #ddd; flex: none; }
.toolbar button.gear { position: relative; }
.dot { position: absolute; right: 2px; top: 1px; width: 12px; height: 12px; }
.toolbar button.search { width: 146px; height: 29px; margin-left: 11px; gap: 3px; background: #ececec; border-radius: 3px; color: #555; }
kbd { font: inherit; font-size: 11px; line-height: 15px; padding: 0 3px; border: 1px solid #aaa; border-radius: 2px; color: #333; }

.stage { position: relative; flex: 1; min-height: 0; display: flex; }
.panel { position: relative; width: 206px; flex: none; display: flex; flex-direction: column; border: solid #ccc; border-width: 1px 1px 1px 0; background: #fff; z-index: 1; font-size: 13px; }
.features { flex: 572; border-bottom: 1px solid #ccc; margin-right: 5px; }
.parts { flex: 400; }
.phead { display: flex; align-items: center; height: 32px; padding-left: 4px; gap: 10px; }
.phead h2 { font-size: 13px; line-height: 20px; font-weight: 500; width: 85px; margin-right: 36px; white-space: nowrap; }
.phead button { width: 20px; }
.filter { display: flex; align-items: center; height: 30px; padding-left: 8px; gap: 11px; }
.filter input { width: 158px; height: 30px; padding: 0 5px; border: 1px solid #bbb; border-radius: 3px; background: #fff; min-width: 0; }
.filter input::placeholder { color: #888; font-style: italic; opacity: 1; }
.group { display: flex; align-items: center; height: 26px; padding-left: 3px; gap: 6px; }
.kids { margin-left: 10px; border-left: 1px solid #bbb; }
.kids li { position: relative; display: flex; align-items: center; height: 26px; gap: 4px; padding-left: 15px; }
.hot { background: linear-gradient(#dceefb, #dceefb) no-repeat center / 100% 24px; margin-left: -11px; }
.kids .hot { padding-left: 26px; }
.hot::before { content: ""; position: absolute; left: 10px; width: 1px; height: 26px; background: #bbb; }
.eye { width: 20px; height: 18px; stroke: #222; margin-left: auto; margin-right: 10px; }
.tip { position: absolute; left: 203px; top: 1px; width: 30px; height: 24px; line-height: 23px; text-align: center; border-radius: 2px; background: #cfdbe5; box-shadow: 0 1px 3px #bbb; }
.list li { display: flex; align-items: center; height: 26px; gap: 4px; padding-left: 5px; }
.dim { color: #aaa; }
.dim svg { opacity: .5; }
.rollback { height: 7px; margin: 9px 5px 0; background: #c2c2c2; }
.partlist { margin-left: 10px; border-left: 1px solid #bbb; }
.partlist li { height: 26px; line-height: 26px; padding-left: 12px; }
.flyout { position: absolute; left: 205px; top: 453px; width: 33px; height: 34px; padding: 0 6px; border: 1px solid #ccc; border-left: 0; background: #fff; }
.flyout svg { width: 19px; }
.arrows { position: absolute; left: 0; top: 0; width: 330px; height: 270px; z-index: 2; pointer-events: none; }

.canvas { position: relative; flex: 1; min-width: 0; }
.model { width: 100%; height: 100%; }
.wash { fill: #ccdaeb; fill-opacity: .22; }
.rim { fill: none; stroke: #b9cde6; stroke-width: 2; }
.over { stroke: #3c78b8; stroke-opacity: .45; }
.edge { stroke: #111; stroke-width: 1.200; stroke-linejoin: round; }
.veil { fill: #ccdaeb; fill-opacity: .2; }
.top { fill: none; stroke: #ffc47d; stroke-width: 3; stroke-linejoin: round; }
.ptext { fill: #2457b8; font-family: "Open Sans", sans-serif; }
.cube { position: absolute; right: 0; top: 4px; width: 180px; height: 170px; font-family: "Open Sans", sans-serif; }
.sidetools { position: absolute; right: 0; top: 404px; width: 32px; border: solid #ccc; border-width: 1px 0 0 1px; background: #fff; }
.sidetools button { display: flex; align-items: center; justify-content: center; width: 31px; height: 33px; padding: 0; border: 0; border-bottom: 1px solid #ccc; background: none; }
.measure { position: absolute; right: 10px; bottom: 4px; display: flex; gap: 15px; }

.tabs { display: flex; height: 31px; flex: none; background: #d0d0d0; }
.plus { width: 39px; border: 0; padding: 0 0 0 9px; background: none; }
.plus svg { width: 16px; height: 16px; }
.tab { display: flex; align-items: center; gap: 3px; width: 200px; height: 27px; margin-right: 2px; padding: 0 11px; border: 0; border-radius: 0 0 4px 4px; background: #e8e8e8; color: #666; }
.tab.on { height: 29px; background: #fff; color: #333; border-bottom: 2px solid #1651b0; }
```
